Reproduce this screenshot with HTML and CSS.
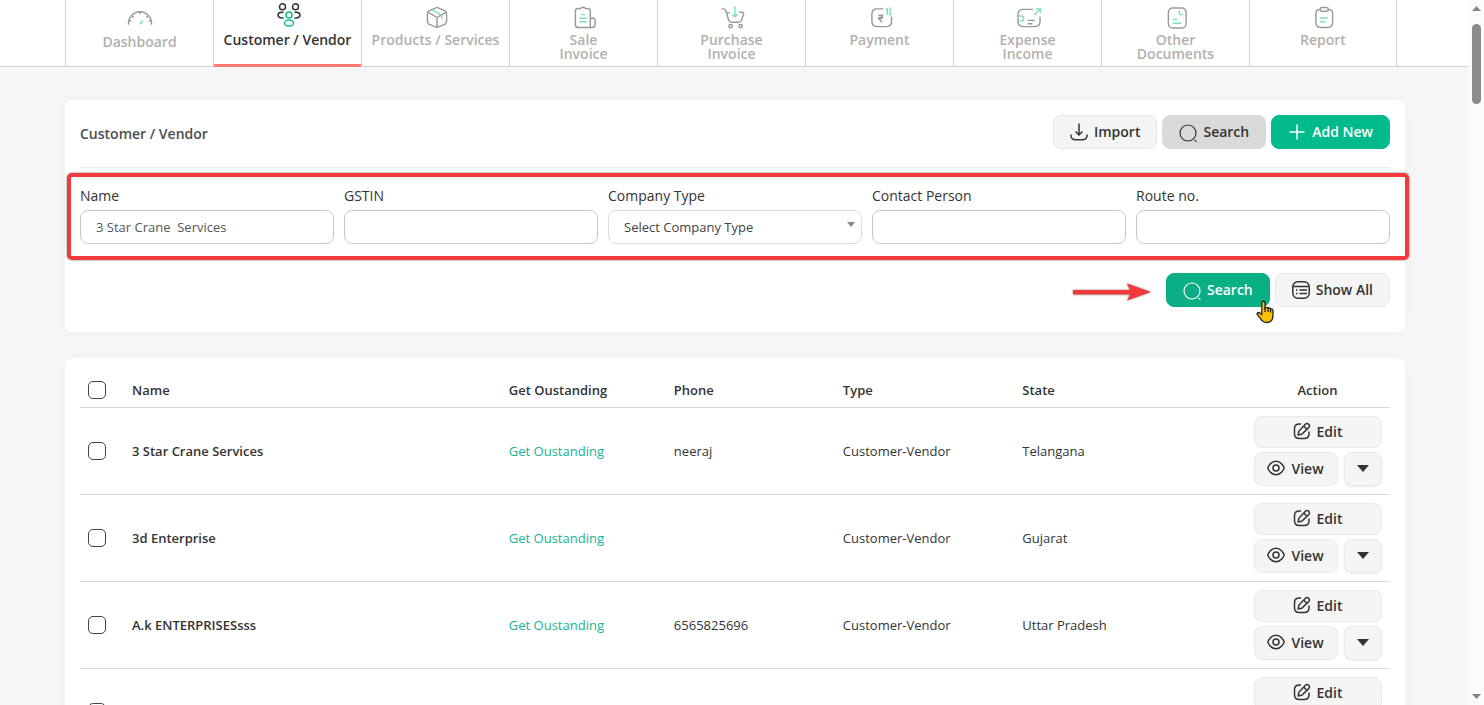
FILE: index.html
```
<!DOCTYPE html>
<html lang="en">
<head>
  <meta charset="UTF-8" />
  <meta name="viewport" content="width=device-width, initial-scale=1.0" />
  <title>Customer / Vendor</title>
  <link rel="stylesheet" href="styles.css">
</head>
<body>
  <svg class="sprite" aria-hidden="true">
    <symbol id="i-edit" viewBox="0 0 18 18">
      <path d="M8 2H6.500Q1.500 2 1.500 6.500V12Q1.500 16.500 6.500 16.500H11Q16 16.500 16 12V9.500" />
      <path d="M5.200 12.800L5.800 9.300L12.400 2.200Q14 .8 15.700 2.300Q17.200 4 15.700 5.600L8.700 12.200ZM11 3.800Q11.700 6.400 14.200 7" />
    </symbol>
    <symbol id="i-view" viewBox="0 0 18 18">
      <path d="M.9 9Q1.200 7 3.200 4.900Q5.700 2.200 9 2.200T14.800 4.900Q16.800 7 17.100 9Q16.800 11 14.800 13.100Q12.300 15.800 9 15.800T3.200 13.100Q1.200 11 .9 9Z" />
      <circle cx="9" cy="9" r="3" />
    </symbol>
    <symbol id="i-search" viewBox="0 0 18 18">
      <circle cx="9" cy="9" r="8" />
      <path d="M15.500 15.800L17.500 17.800" />
    </symbol>
  </svg>

  <div class="page">
    <nav class="main-nav">
      <a class="nav-item dashboard" href="#">
        <svg class="nav-icon" viewBox="0 0 26 24"><path d="M1 17.500V16A12 12 0 0 1 25 16V17.500M5 8.500L6.500 10M13 4.500V6.500M21 8.500L19.500 10M1.500 13L3.500 13.500M24.500 13L22.500 13.500" /><path class="mint" d="M13 17L16 13" /></svg>
        <span>Dashboard</span>
      </a>
      <a class="nav-item active" href="#">
        <svg class="nav-icon" viewBox="0 0 24 24"><ellipse cx="5.500" cy="3.800" rx="3" ry="3" /><ellipse cx="18.500" cy="3.800" rx="3" ry="3" /><path d="M6.500 9.200H4.500Q1 9.500 1 12T4.500 15H6.500M17.500 9.200H19.500Q23 9.500 23 12T19.500 15H17.500" /><circle class="mint" cx="12" cy="12" r="3" /><ellipse class="mint" cx="12" cy="20" rx="4.500" ry="3" /></svg>
        <span>Customer / Vendor</span>
      </a>
      <a class="nav-item" href="#">
        <svg class="nav-icon" viewBox="0 0 24 24"><path d="M12 1.500L20.500 5Q22 6 22 8V16Q22 18 20.500 19L12 22.500L3.500 19Q2 18 2 16V8Q2 6 3.500 5ZM2.500 6.500L12 12L21.500 6.500M12 12V22" /><path class="mint" d="M7 4L17 9.500V13.500" /></svg>
        <span>Products / Services</span>
      </a>
      <a class="nav-item" href="#">
        <svg class="nav-icon" viewBox="0 0 24 24"><path d="M17.500 22.500H5Q2 22.500 2 19.500V5Q2 2.500 5 2.500Q6.500 3.500 8 2Q10 .5 12 2Q13.500 3.500 15 2.500Q17.500 3 17.500 5V22.500M17.500 14Q18 12.500 20 12.500Q22.500 13 22.500 15V20Q22 22.500 19 22.500H17.500V14Z" /><path class="mint" d="M8 9H12M6 12.800H14M6 16.500H14" /></svg>
        <span>Sale<br>Invoice</span>
      </a>
      <a class="nav-item" href="#">
        <svg class="nav-icon" viewBox="0 0 24 24"><path d="M0 3H2.500Q4 3.200 4.500 5L7.500 14.500Q8.500 17 10.500 17H18Q20 17 21 14.500L23 8.500Q23.500 7 21.500 6.500H18.500M5 7H8.500" /><circle cx="9.500" cy="21" r="1.700" /><circle cx="20" cy="21" r="1.700" /><path class="mint" d="M14 0V11M11 8.500L14 11.500L17 8.500" /></svg>
        <span>Purchase<br>Invoice</span>
      </a>
      <a class="nav-item" href="#">
        <svg class="nav-icon" viewBox="0 0 24 24"><path d="M14.500 3H8Q2.500 3 2.500 8.500V16Q2.500 21.500 8 21.500H17.500Q23 21.500 23 16V11M9 9.500H14.500M9 12H14.500M10 9.500Q13 9.500 13 11.500T10 13.500L13 17" /><path class="mint" d="M18.500 9.500V3L17 4.500M21.500 1.500V9L23 7.500" /></svg>
        <span>Payment</span>
      </a>
      <a class="nav-item" href="#">
        <svg class="nav-icon wide" viewBox="0 0 28 24"><path d="M18 3.500H8Q2.500 3.500 2.500 9V16Q2.500 21.500 8 21.500H20Q25.500 21.500 25.500 16V11M12.500 15H20M12.500 18.500H17.500" /><path class="mint" d="M3 10.500H6Q8.500 10.500 8.500 13T6 15.500H3M19.500 9.500L25.500 3.500M21 3H25.800V7.500" /></svg>
        <span>Expense<br>Income</span>
      </a>
      <a class="nav-item" href="#">
        <svg class="nav-icon" viewBox="0 0 24 24"><rect x="3" y="2" width="18.500" height="21" rx="4.500" /><path class="mint" d="M14.500 5V7Q14.500 9 16.500 9H18.500M7.500 14H12M7.500 18H16.500" /></svg>
        <span>Other<br>Documents</span>
      </a>
      <a class="nav-item" href="#">
        <svg class="nav-icon" viewBox="0 0 24 24"><path d="M8 3.500Q3.500 3.500 3.500 8V17Q3.500 22.500 9 22.500H15.500Q21 22.500 21 17V8Q21 3.500 16.500 3.500M10 1.500H14.500Q16.500 1.500 16.500 3.500T14.500 5.500H10Q8 5.500 8 3.500T10 1.500Z" /><path class="mint" d="M8 12.500H16M8 16.500H13.500" /></svg>
        <span>Report</span>
      </a>
    </nav>

    <main class="content">
      <section class="card search-card">
        <div class="card-header">
          <h1>Customer / Vendor</h1>
          <div class="btn-group">
            <button class="btn" type="button">
              <svg class="icon" viewBox="0 0 18 18"><path d="M9 .5V12M5.500 8.500L9 12L12.500 8.500M.8 11.500Q1 16.800 5.500 16.800H12.500Q17 16.800 17.200 11.500" /></svg>
              Import
            </button>
            <button class="btn btn-dim" type="button"><svg class="icon thin drop"><use href="#i-search" /></svg>Search</button>
            <button class="btn btn-green" type="button">
              <svg class="icon" viewBox="0 0 18 18"><path d="M9 1.500V16.500M1.500 9H16.500" /></svg>
              Add New
            </button>
          </div>
        </div>

        <form class="filters" onsubmit="return false">
          <div class="fields">
            <div class="field">
              <label for="name">Name</label>
              <input id="name" type="text" value="3 Star Crane  Services">
            </div>
            <div class="field">
              <label for="gstin">GSTIN</label>
              <input id="gstin" type="text">
            </div>
            <div class="field">
              <label for="company-type">Company Type</label>
              <div class="select-wrap">
                <select id="company-type">
                  <option>Select Company Type</option>
                </select>
              </div>
            </div>
            <div class="field">
              <label for="contact">Contact Person</label>
              <input id="contact" type="text">
            </div>
            <div class="field">
              <label for="route">Route no.</label>
              <input id="route" type="text">
            </div>
            <div class="highlight"></div>
          </div>
          <div class="form-actions">
            <svg class="arrow" viewBox="0 0 78 18"><path d="M0 7H57L54 .5L78 9L54 17.500L57 11.500H0Z" /></svg>
            <button class="btn btn-green pressed" type="submit">
              <svg class="icon thin drop"><use href="#i-search" /></svg>Search
              <svg class="pointer" viewBox="0 0 18 24"><path d="M5.800 2Q7.500 .5 9 2V8Q10.500 6.500 12 8.200Q13.500 7 14.500 9Q16.500 8.200 17 10.500V16Q16.500 22.500 11 22.500Q6.500 22.500 4.500 18.500L1.200 14.500Q.8 12.500 3 12.500L5.800 14.500Z" /><path d="M9 8V12M12 8.500V12M14.500 9V12.500" /></svg>
            </button>
            <button class="btn" type="button">
              <svg class="icon" viewBox="0 0 18 18"><rect x=".8" y=".8" width="16.400" height="16.400" rx="5" /><path d="M1 5.500H17M4 9H5.500M7.500 9H15M4 12.500H5.500M7.500 12.500H15" /></svg>
              Show All
            </button>
          </div>
        </form>
      </section>

      <section class="card list-card">
        <table>
          <colgroup>
            <col class="c-check"><col><col class="c-get"><col class="c-phone"><col class="c-type"><col class="c-state"><col class="c-action">
          </colgroup>
          <thead>
            <tr>
              <th><input type="checkbox" aria-label="Select all"></th>
              <th>Name</th>
              <th>Get Oustanding</th>
              <th>Phone</th>
              <th>Type</th>
              <th>State</th>
              <th class="action">Action</th>
            </tr>
          </thead>
          <tbody>
            <tr>
              <td><input type="checkbox" aria-label="Select 3 Star Crane Services"></td>
              <td class="name">3 Star Crane Services</td>
              <td><a href="#">Get Oustanding</a></td>
              <td>neeraj</td>
              <td>Customer-Vendor</td>
              <td>Telangana</td>
              <td>
                <div class="row-actions">
                  <button class="btn edit" type="button"><svg class="icon"><use href="#i-edit" /></svg>Edit</button>
                  <button class="btn view" type="button"><svg class="icon"><use href="#i-view" /></svg>View</button>
                  <button class="btn more" type="button" aria-label="More"></button>
                </div>
              </td>
            </tr>
            <tr>
              <td><input type="checkbox" aria-label="Select 3d Enterprise"></td>
              <td class="name">3d Enterprise</td>
              <td><a href="#">Get Oustanding</a></td>
              <td></td>
              <td>Customer-Vendor</td>
              <td>Gujarat</td>
              <td>
                <div class="row-actions">
                  <button class="btn edit" type="button"><svg class="icon"><use href="#i-edit" /></svg>Edit</button>
                  <button class="btn view" type="button"><svg class="icon"><use href="#i-view" /></svg>View</button>
                  <button class="btn more" type="button" aria-label="More"></button>
                </div>
              </td>
            </tr>
            <tr>
              <td><input type="checkbox" aria-label="Select A.k ENTERPRISESsss"></td>
              <td class="name">A.k ENTERPRISESsss</td>
              <td><a href="#">Get Oustanding</a></td>
              <td>6565825696</td>
              <td>Customer-Vendor</td>
              <td>Uttar Pradesh</td>
              <td>
                <div class="row-actions">
                  <button class="btn edit" type="button"><svg class="icon"><use href="#i-edit" /></svg>Edit</button>
                  <button class="btn view" type="button"><svg class="icon"><use href="#i-view" /></svg>View</button>
                  <button class="btn more" type="button" aria-label="More"></button>
                </div>
              </td>
            </tr>
            <tr>
              <td><input type="checkbox" aria-label="Select row"></td>
              <td></td>
              <td></td>
              <td></td>
              <td></td>
              <td></td>
              <td>
                <div class="row-actions">
                  <button class="btn edit" type="button"><svg class="icon"><use href="#i-edit" /></svg>Edit</button>
                  <button class="btn view" type="button" aria-label="View"><svg class="icon"><use href="#i-view" /></svg></button>
                  <button class="btn more" type="button" aria-label="More"></button>
                </div>
              </td>
            </tr>
          </tbody>
        </table>
      </section>
    </main>
  </div>

  <div class="scrollbar">
    <svg viewBox="0 0 9 5"><path d="M0 5L4.500 0L9 5Z" /></svg>
    <div class="track"><div class="thumb"></div></div>
    <svg viewBox="0 0 9 5"><path d="M0 0H9L4.500 5Z" /></svg>
  </div>
</body>
</html>
```
FILE: styles.css
```
* {
  box-sizing: border-box;
}
body {
  margin: 0;
  display: flex;
  height: 100vh;
  overflow: hidden;
  font-family: "Open Sans", "Noto Sans", sans-serif;
  font-size: 13px;
  color: #333;
  background-color: #f7f7f7;
}
.sprite {
  position: absolute;
  width: 0;
  height: 0;
}
svg {
  fill: none;
  stroke: currentColor;
  flex-shrink: 0;
}
a {
  color: #14b592;
  text-decoration: none;
}
.page {
  flex: 1;
  min-width: 0;
  overflow: hidden;
}

/* top navigation */
.main-nav {
  display: flex;
  height: 67px;
  padding: 0 64px 0 65px;
  background-color: #fff;
  border-bottom: 1px solid #d4d4d4;
}
.nav-item {
  flex: 0 1 148px;
  height: 67px;
  display: flex;
  flex-direction: column;
  align-items: center;
  gap: 4px;
  padding-top: 6px;
  border-left: 1px solid #d4d4d4;
  color: #b3b0ad;
  font-size: 14px;
  font-weight: 600;
  line-height: 14px;
  text-align: center;
}
.nav-item:last-child {
  border-right: 1px solid #d4d4d4;
}
.nav-item.dashboard {
  padding-top: 8px;
}
.nav-item.active {
  padding-top: 3px;
  gap: 6px;
  color: #333;
  background: linear-gradient(#ff7b70, #ff7b70) bottom / 100% 3px no-repeat;
}
.nav-icon {
  width: 26px;
  height: 23px;
  margin-left: 2px;
  stroke: #999;
  stroke-width: 1.5;
}
.dashboard .nav-icon {
  margin-left: 0;
}
.nav-icon.wide {
  width: 28px;
}
.nav-icon .mint {
  stroke: #7fdec5;
}
.active .nav-icon {
  height: 24px;
  stroke: #333;
}
.active .nav-icon .mint {
  stroke: #12bd92;
}

/* cards */
.content {
  padding: 33px 64px 0 65px;
  display: flex;
  flex-direction: column;
  gap: 26px;
}
.card {
  padding: 15px;
  background-color: #fff;
  border-radius: 8px;
  box-shadow: 0 0 16px rgba(0, 40, 20, 0.04);
}
.search-card {
  padding-bottom: 25px;
}
.card-header {
  display: flex;
  justify-content: space-between;
  align-items: flex-end;
  padding-bottom: 18px;
  border-bottom: 1px solid #ececec;
}
h1 {
  margin: 0;
  font-size: 14px;
  font-weight: 600;
  line-height: 30px;
  color: #4d4d4d;
}
.btn-group {
  display: flex;
  gap: 5px;
}
.btn {
  display: flex;
  align-items: center;
  justify-content: center;
  gap: 6px;
  height: 34px;
  padding: 0 16px 1px;
  font-family: inherit;
  font-size: 14px;
  font-weight: 600;
  color: #333;
  background-color: #f5f5f5;
  border: 1px solid #e9e9e9;
  border-radius: 8px;
  cursor: pointer;
}
.btn-dim {
  background-color: #d9d9d9;
  border-color: #d9d9d9;
}
.btn-green {
  color: #fff;
  background-color: #00ba8b;
  border-color: #00ba8b;
}
.btn-green.pressed {
  position: relative;
  background-color: #09ae84;
  border-color: #09ae84;
}
.icon {
  width: 18px;
  height: 18px;
  stroke-width: 1.5;
}
.icon.thin {
  stroke-width: 1.2;
}
.icon.drop {
  margin-top: 2px;
}

/* filters */
.fields {
  position: relative;
  display: grid;
  grid-template-columns: repeat(5, 1fr);
  gap: 10px;
  padding: 18px 0 15px;
}
.field label {
  display: block;
  margin-bottom: 4px;
  font-size: 14px;
  line-height: 20px;
}
.field input,
.field select {
  display: block;
  width: 100%;
  height: 34px;
  padding: 0 15px;
  font-family: inherit;
  font-size: 13px;
  color: #555;
  background-color: #fff;
  border: 1px solid #c8c8c8;
  border-radius: 8px;
}
.field select {
  appearance: none;
  color: #444;
  border-color: #dcdcdc;
}
.select-wrap {
  position: relative;
}
.select-wrap::after {
  content: "";
  position: absolute;
  top: 12px;
  right: 7px;
  border: 4px solid transparent;
  border-top: 5px solid #888;
  border-bottom: 0;
}
.highlight {
  position: absolute;
  inset: 5px -19px -1px -13px;
  border: 4px solid #f23a3a;
  border-radius: 5px;
  box-shadow: 0 0 2px rgba(0, 0, 0, 0.7);
  pointer-events: none;
}
.form-actions {
  display: flex;
  justify-content: flex-end;
  align-items: center;
  gap: 5px;
  padding-top: 14px;
}
.arrow {
  width: 78px;
  height: 18px;
  margin-top: 4px;
  margin-right: 10px;
  fill: #f23a3a;
  stroke: none;
  filter: drop-shadow(0 0 1px rgba(0, 0, 0, 0.5));
}
.pointer {
  position: absolute;
  right: -5px;
  bottom: -18px;
  width: 18px;
  height: 24px;
  fill: #ffc107;
  stroke: #222;
  stroke-width: 1.3;
}

/* table */
table {
  width: 100%;
  table-layout: fixed;
  border-collapse: collapse;
}
.c-check { width: 52px; }
.c-get { width: 12.6%; }
.c-phone { width: 12.9%; }
.c-type { width: 13.7%; }
.c-state { width: 17%; }
.c-action { width: 145px; }
th,
td {
  padding: 8px 0;
  text-align: left;
  vertical-align: middle;
  border-bottom: 1px solid #d9d9d9;
}
th {
  height: 34px;
  padding: 7px 0;
  font-weight: 600;
}
th.action {
  text-align: center;
}
td {
  height: 87px;
}
.name {
  font-weight: 600;
}
input[type="checkbox"] {
  appearance: none;
  display: block;
  width: 18px;
  height: 18px;
  margin: 0 0 0 8px;
  border: 1px solid #444;
  border-radius: 5px;
  background-color: #fff;
}
.row-actions {
  display: grid;
  grid-template-columns: 84px 38px;
  justify-content: center;
  gap: 4px 6px;
}
.edit {
  grid-column: span 2;
  height: 32px;
}
.view,
.more {
  padding: 0 0 1px;
}
.more {
  box-shadow: 0 1px 2px rgba(0, 0, 0, 0.08);
}
.more::before {
  content: "";
  border: 6px solid transparent;
  border-top: 7px solid #333;
  border-bottom: 0;
}

/* scroll bar at the right edge */
.scrollbar {
  width: 15px;
  display: flex;
  flex-direction: column;
  align-items: center;
  padding: 6px 0;
  background-color: #fbfbfb;
}
.scrollbar svg {
  width: 9px;
  height: 5px;
  fill: #858585;
  stroke: none;
}
.track {
  flex: 1;
  padding-top: 13px;
}
.thumb {
  width: 9px;
  height: 12%;
  border-radius: 5px;
  background-color: #8b8b8b;
}
```
